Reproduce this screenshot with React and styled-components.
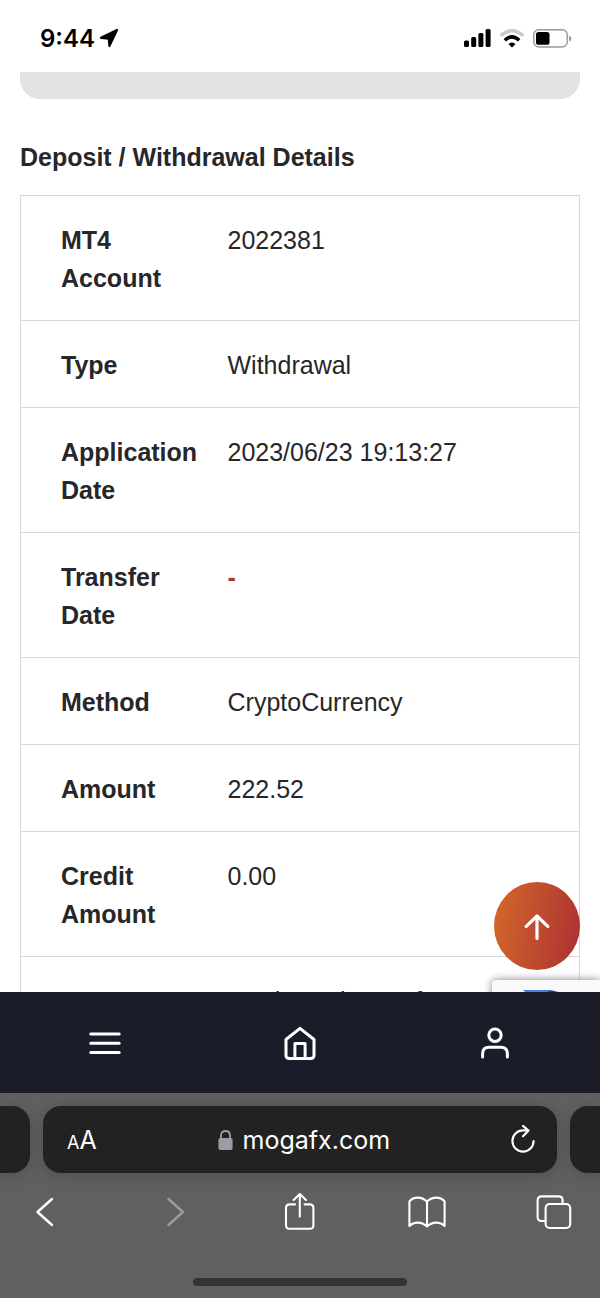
import styled, { createGlobalStyle, css } from 'styled-components';

const rows = [
  { label: 'MT4 Account', value: '2022381' },
  { label: 'Type', value: 'Withdrawal' },
  { label: 'Application Date', value: '2023/06/23 19:13:27' },
  { label: 'Transfer Date', value: '-', empty: true },
  { label: 'Method', value: 'CryptoCurrency' },
  { label: 'Amount', value: '222.52' },
  { label: 'Credit Amount', value: '0.00' },
  { label: 'Status', value: 'North Bank transfer' },
];

const StatusBar = () => (
  <StatusContainer>
    <Clock>
      9:44
      <svg width="20" height="20" viewBox="0 0 20 20" aria-hidden="true">
        <path d="M18 2 L10.4 18 L9.8 10.6 L2 9.8 Z" fill="#000" stroke="#000" strokeWidth="2.2" strokeLinejoin="round" />
      </svg>
    </Clock>
    <StatusIcons>
      <svg width="27" height="18" viewBox="0 0 27 18" aria-hidden="true">
        <rect x="0" y="11.5" width="5" height="6.5" rx="1.5" />
        <rect x="7.2" y="8" width="5" height="10" rx="1.5" />
        <rect x="14.4" y="4" width="5" height="14" rx="1.5" />
        <rect x="21.6" y="0" width="5" height="18" rx="1.5" />
      </svg>
      <svg width="26" height="19" viewBox="0 0 26 19" fill="none" aria-hidden="true">
        <path d="M1.8 6.8 Q13 -3.4 24.2 6.8" stroke="#c9c9c9" strokeWidth="3.4" />
        <path d="M5.8 11.2 Q13 4.6 20.2 11.2" stroke="#000" strokeWidth="3.5" />
        <path d="M13 18.6 L9.4 15 Q13 11.8 16.6 15 Z" fill="#000" />
      </svg>
      <svg width="39" height="19" viewBox="0 0 39 19" fill="none" aria-hidden="true">
        <rect x="0.8" y="0.8" width="33.4" height="17.2" rx="5" stroke="#999" strokeWidth="1.4" />
        <rect x="3" y="3" width="13.5" height="12.8" rx="2.6" fill="#000" />
        <path d="M36 6.4 Q38.4 7.4 38.4 9.4 Q38.4 11.4 36 12.4 Z" fill="#999" />
      </svg>
    </StatusIcons>
  </StatusContainer>
);

const Badge = () => (
  <BadgeContainer>
    <svg width="64" height="64" viewBox="0 0 64 64" aria-hidden="true">
      <path d="M24 0 Q50 0 64 32 L50 20 Q42 12 32 14 Z" fill="#1c3aa9" />
      <path d="M26 0 H1 L14 12 Q0 20 0 32 H14 Q16 16 32 14 Z" fill="#4a80e8" />
      <path d="M0 32 A32 32 0 0 0 56 53 L44 42 Q22 54 14 32 Z" fill="#ababab" />
    </svg>
  </BadgeContainer>
);

const Details = () => (
  <Content>
    <Card />
    <Heading>Deposit / Withdrawal Details</Heading>
    <Table>
      <tbody>
        {rows.map((row) => (
          <tr key={row.label}>
            <Label scope="row">{row.label}</Label>
            <Value $empty={row.empty}>{row.value}</Value>
          </tr>
        ))}
      </tbody>
    </Table>
    <ScrollTop type="button" aria-label="Back to top">
      <svg width="28" height="30" viewBox="0 0 28 30" fill="none" stroke="#fff" strokeWidth="3.2" strokeLinecap="round" strokeLinejoin="round" aria-hidden="true">
        <path d="M14 27.5 V5 M3.2 15.4 L14 5 L24.8 15.4" />
      </svg>
    </ScrollTop>
    <Badge />
  </Content>
);

const SiteNav = () => (
  <Nav>
    <NavButton type="button" aria-label="Menu">
      <svg width="32" height="36" viewBox="0 0 32 36" aria-hidden="true">
        <path d="M1.8 9 H30.2 M1.8 18.2 H30.2 M1.8 27.4 H30.2" />
      </svg>
    </NavButton>
    <NavButton type="button" aria-label="Home">
      <svg width="34" height="36" viewBox="0 0 34 36" aria-hidden="true">
        <path d="M3 14.5 L17 3.4 L31 14.5 V30.3 Q31 33.6 27.7 33.6 H6.3 Q3 33.6 3 30.3 Z M11.9 33.3 V18.4 H22.1 V33.3" />
      </svg>
    </NavButton>
    <NavButton type="button" aria-label="Account">
      <svg width="30" height="36" viewBox="0 0 30 36" aria-hidden="true">
        <circle cx="15" cy="10.2" r="6.2" />
        <path d="M2.6 32 V28.8 Q2.6 22.3 9.2 22.3 H20.8 Q27.4 22.3 27.4 28.8 V32" />
      </svg>
    </NavButton>
  </Nav>
);

const Browser = () => (
  <BrowserContainer>
    <Tabs>
      <SideTab $side="left" />
      <AddressBar>
        <TextSize type="button" aria-label="Text size">
          <small>A</small>A
        </TextSize>
        <Address type="button">
          <svg width="15" height="20" viewBox="0 0 15 20" aria-hidden="true">
            <rect x="0.4" y="8" width="14.2" height="12" rx="2" fill="#9c9ba3" />
            <path d="M3 9 V5.4 Q3 1 7.5 1 Q12 1 12 5.4 V9" fill="none" stroke="#9c9ba3" strokeWidth="1.8" />
          </svg>
          mogafx.com
        </Address>
        <IconButton type="button" aria-label="Reload">
          <svg width="24" height="30" viewBox="0 0 24 30" strokeWidth="2.1" aria-hidden="true">
            <path d="M22.6 16 A10.6 10.6 0 1 1 12 5.4 H17.4 M12 0.9 L17.6 5.6 L12 11.2" />
          </svg>
        </IconButton>
      </AddressBar>
      <SideTab $side="right" />
    </Tabs>
    <Toolbar>
      <IconButton type="button" aria-label="Back">
        <svg width="36" height="40" viewBox="0 0 36 40" strokeWidth="2.4" aria-hidden="true">
          <path d="M24 7 L9.5 20 L24 33" />
        </svg>
      </IconButton>
      <IconButton type="button" aria-label="Forward" disabled>
        <svg width="36" height="40" viewBox="0 0 36 40" strokeWidth="2.4" aria-hidden="true">
          <path d="M13.5 7 L28 20 L13.5 33" />
        </svg>
      </IconButton>
      <IconButton type="button" aria-label="Share">
        <svg width="36" height="40" viewBox="0 0 36 40" strokeWidth="2.1" aria-hidden="true">
          <path d="M14 12.4 H8.6 Q5 12.4 5 16 V33.2 Q5 36.8 8.6 36.8 H28.8 Q32.4 36.8 32.4 33.2 V16 Q32.4 12.4 28.8 12.4 H23.6 M18.8 24.6 V2 M12.6 8 L18.8 2 L25 8" />
        </svg>
      </IconButton>
      <IconButton type="button" aria-label="Bookmarks">
        <svg width="38" height="40" viewBox="0 0 38 40" strokeWidth="2.1" aria-hidden="true">
          <path d="M19 9.6 Q15 5.6 9.8 5.6 Q4.6 5.6 1.4 9.4 V34 Q4.6 30.6 9.8 30.6 Q15 30.6 19 34.6 Q23 30.6 28.2 30.6 Q33.4 30.6 36.6 34 V9.4 Q33.4 5.6 28.2 5.6 Q23 5.6 19 9.6 V34.4" />
        </svg>
      </IconButton>
      <IconButton type="button" aria-label="Tabs">
        <svg width="36" height="40" viewBox="0 0 36 40" strokeWidth="2.1" aria-hidden="true">
          <path d="M9.6 29 H5.6 Q1.6 29 1.6 25 V8.4 Q1.6 4.4 5.6 4.4 H22.6 Q26.6 4.4 26.6 8.4 V12" />
          <rect x="9.6" y="12" width="24.6" height="24" rx="4" />
        </svg>
      </IconButton>
    </Toolbar>
    <HomeIndicator />
  </BrowserContainer>
);

const App = () => (
  <Screen>
    <GlobalStyle />
    <StatusBar />
    <Details />
    <SiteNav />
    <Browser />
  </Screen>
);

export default App;


const GlobalStyle = createGlobalStyle`
  * {
    box-sizing: border-box;
  }

  body {
    margin: 0;
    background: #fff;
    font-family: "Liberation Sans", Helvetica, Arial, sans-serif;
    color: #27272a;
  }

  button {
    margin: 0;
    padding: 0;
    border: none;
    background: none;
    color: inherit;
    font: inherit;
    cursor: pointer;
  }

  svg {
    display: block;
    flex: none;
  }
`;

const systemFont = css`
  font-family: Inter, "Liberation Sans", sans-serif;
`;

const Screen = styled.div`
  display: flex;
  flex-direction: column;
  height: 100vh;
  overflow: hidden;
`;

const StatusContainer = styled.header`
  ${systemFont}
  display: flex;
  align-items: center;
  justify-content: space-between;
  flex: none;
  height: 72px;
  padding: 4px 28px 0 40px;
  color: #000;
`;

const Clock = styled.div`
  display: flex;
  align-items: center;
  gap: 4px;
  font-size: 24px;
  font-weight: 600;
`;

const StatusIcons = styled.div`
  display: flex;
  align-items: center;
  gap: 8px;
`;

const Content = styled.main`
  flex: 1;
  min-height: 0;
  padding: 0 20px;
  position: relative;
  overflow: hidden;
`;

const Card = styled.div`
  height: 27px;
  border-radius: 0 0 20px 20px;
  background: #e3e3e3;
`;

const Heading = styled.h2`
  margin: 40px 0 19px;
  font-size: 25px;
  font-weight: 700;
  line-height: 37px;
`;

const Table = styled.table`
  width: 100%;
  border: 1px solid #d8d8d8;
  border-collapse: collapse;
  font-size: 25px;
  line-height: 38px;
  text-align: left;

  tr {
    border-top: 1px solid #d8d8d8;
  }

  th,
  td {
    padding: 25px 0 23px;
    vertical-align: top;
  }
`;

const Label = styled.th`
  width: 207px;

  && {
    padding-left: 40px;
    padding-right: 28px;
  }
`;

const Value = styled.td`
  color: ${(props) => (props.$empty ? '#a63a3a' : 'inherit')};
  font-weight: ${(props) => (props.$empty ? 700 : 400)};
`;

const ScrollTop = styled.button`
  && {
    display: flex;
    align-items: center;
    justify-content: center;
    width: 86px;
    height: 88px;
    border-radius: 50%;
    background: linear-gradient(100deg, #d4682a, #ab3033);
    position: absolute;
    right: 20px;
    bottom: 22px;
  }
`;

const BadgeContainer = styled.div`
  width: 108px;
  height: 112px;
  padding: 10px 0 0 30px;
  border-radius: 4px 0 0 4px;
  background: #f9f9f9;
  box-shadow: 0 0 8px #808080;
  position: absolute;
  right: 0;
  bottom: -100px;
`;

const Nav = styled.nav`
  display: flex;
  flex: none;
  height: 101px;
  padding: 0 7px;
  background: #1b1c29;
`;

const NavButton = styled.button`
  display: flex;
  flex: 1;
  align-items: center;
  justify-content: center;

  svg {
    fill: none;
    stroke: #fff;
    stroke-width: 3;
    stroke-linecap: round;
    stroke-linejoin: round;
  }
`;

const BrowserContainer = styled.footer`
  ${systemFont}
  display: flex;
  flex-direction: column;
  align-items: center;
  flex: none;
  padding: 13px 0 12px;
  background: #606060;
  color: #fff;
`;

const Tabs = styled.div`
  display: flex;
  gap: 13px;
  width: 100%;
  height: 67px;
`;

const tab = css`
  background: #222;
  box-shadow: 0 2px 16px rgba(0, 0, 0, 0.18);
`;

const SideTab = styled.div`
  ${tab}
  flex: 0 0 30px;
  border-radius: ${(props) => (props.$side === 'left' ? '0 18px 18px 0' : '18px 0 0 18px')};
`;

const AddressBar = styled.div`
  ${tab}
  display: flex;
  flex: 1;
  align-items: center;
  justify-content: space-between;
  padding: 0 22px 0 24px;
  border-radius: 18px;
`;

const TextSize = styled.button`
  && {
    font-size: 25px;
  }

  small {
    font-size: 18px;
  }
`;

const Address = styled.button`
  && {
    display: flex;
    align-items: center;
    gap: 10px;
    font-size: 25px;
  }
`;

const IconButton = styled.button`
  svg {
    fill: none;
    stroke: ${(props) => (props.disabled ? '#9b9b9b' : '#fff')};
    stroke-linecap: round;
    stroke-linejoin: round;
  }
`;

const Toolbar = styled.div`
  display: flex;
  align-items: center;
  justify-content: space-between;
  width: 100%;
  margin-top: 19px;
  padding: 0 28px;
`;

const HomeIndicator = styled.div`
  width: 214px;
  height: 8px;
  margin-top: 46px;
  border-radius: 4px;
  background: #333;
`;
